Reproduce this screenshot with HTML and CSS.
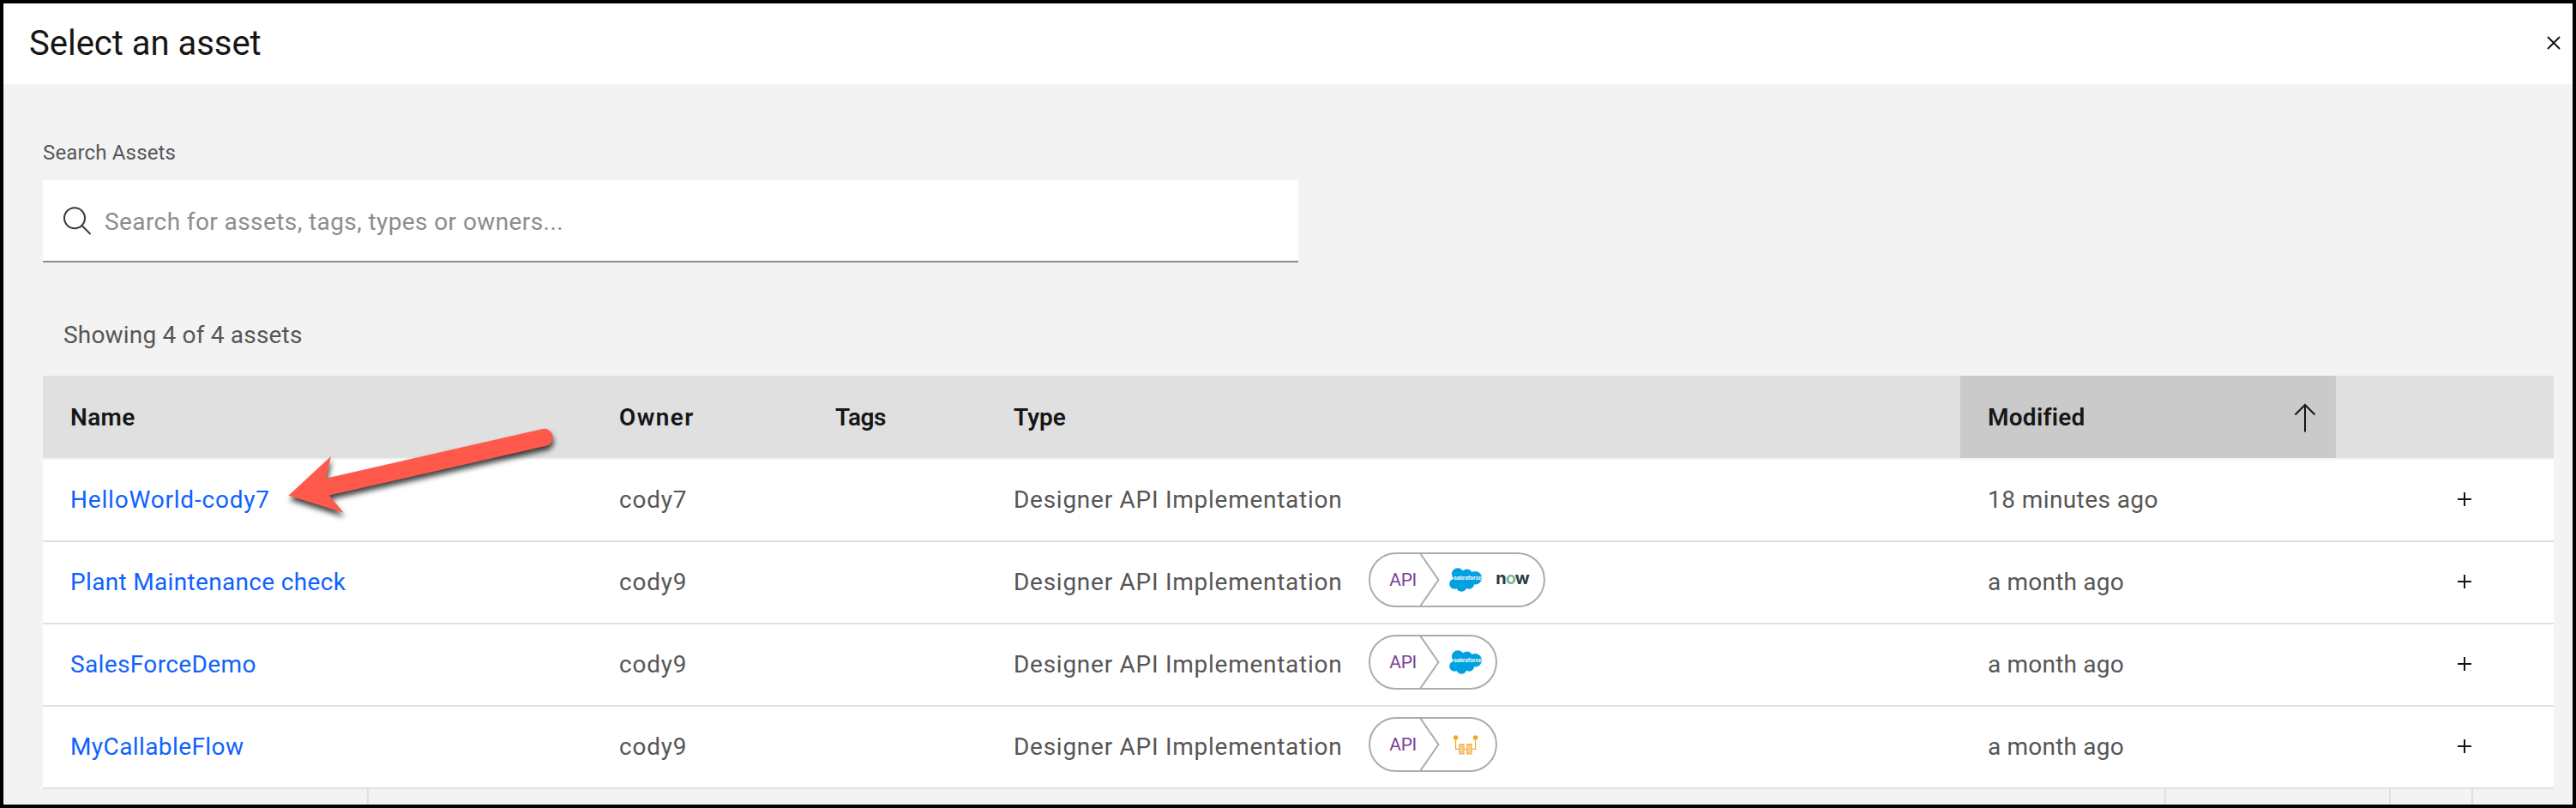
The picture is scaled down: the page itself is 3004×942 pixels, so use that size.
FILE: index.html
```html
<!DOCTYPE html>
<html lang="en">
<head>
<meta charset="utf-8">
<title>Select an asset</title>
<link rel="stylesheet" href="styles.css">
</head>
<body>
<svg class="defs" width="0" height="0" aria-hidden="true">
  <symbol id="plus" viewBox="0 0 16 16"><path d="M7 0h2v7h7v2H9v7H7V9H0V7h7z"/></symbol>
  <symbol id="chevron" viewBox="0 0 24 60"><path d="M1 -1L22.5 30L1 61" fill="none" stroke="#acacac" stroke-width="2"/></symbol>
  <symbol id="cloud" viewBox="0 0 38 28">
    <g fill="#00a1e0"><circle cx="10" cy="7.3" r="7"/><circle cx="20.7" cy="7.7" r="6.3"/><circle cx="30.2" cy="11.8" r="7.8"/><circle cx="6.2" cy="18.7" r="6"/><circle cx="14.3" cy="21.6" r="6.2"/><circle cx="23.3" cy="19" r="5.8"/><path d="M6 8h24v10H6z"/></g>
  </symbol>
  <symbol id="flow" viewBox="0 0 38 28">
    <g fill="none" stroke="#f5b04a" stroke-width="1.2"><path d="M7.6 6v10.400h4.400M30.600 6v10.400h-4.400M17.500 16.400h3" stroke="#f5a623"/><path d="M11.900 10.700h5.200v11.200h-5.200zM20.800 10.700h5.200v11.200h-5.200z" fill="#f9cf94"/></g>
    <g fill="#f9a51a"><circle cx="7.600" cy="3" r="2.700"/><circle cx="30.600" cy="3" r="2.700"/></g>
  </symbol>
</svg>
<div class="dialog">
  <header class="dialog-header">
    <h1 class="title">Select an asset</h1>
    <svg class="close" viewBox="0 0 16 16"><path d="M1 1l14 14M15 1L1 15"/></svg>
  </header>
  <main class="content">
    <div class="label">Search Assets</div>
    <div class="search">
      <svg class="search-icon" viewBox="0 0 34 34"><circle cx="14" cy="14.300" r="12"/><path d="M22.500 23L32.500 33"/></svg>
      <span class="placeholder">Search for assets, tags, types or owners...</span>
    </div>
    <div class="count">Showing 4 of 4 assets</div>
    <div class="table">
      <div class="row head">
        <div class="cell">Name</div>
        <div class="cell owner-head">Owner</div>
        <div class="cell tags-head">Tags</div>
        <div class="cell type-head">Type</div>
        <div class="cell sorted">Modified<svg class="sort" viewBox="0 0 26 34"><path d="M13 33.500V2M1.500 13.500L13 2l11.500 11.500"/></svg></div>
        <div class="cell"></div>
      </div>
      <div class="row">
        <div class="cell link hello">HelloWorld-cody7</div>
        <div class="cell owner">cody7</div>
        <div class="cell"></div>
        <div class="cell type">Designer API Implementation</div>
        <div class="cell minutes">18 minutes ago</div>
        <div class="cell action"><svg class="plus"><use href="#plus"/></svg></div>
      </div>
      <div class="row">
        <div class="cell link plant">Plant Maintenance check</div>
        <div class="cell owner">cody9</div>
        <div class="cell"></div>
        <div class="cell type">Designer API Implementation
          <div class="pill">
            <span class="api">API</span><svg class="chevron"><use href="#chevron"/></svg>
            <div class="brand"><svg class="logo"><use href="#cloud"/></svg><span class="cloud-text">salesforce</span></div>
            <div class="now">n<span class="green">o</span>w</div>
          </div>
        </div>
        <div class="cell month">a month ago</div>
        <div class="cell action"><svg class="plus"><use href="#plus"/></svg></div>
      </div>
      <div class="row">
        <div class="cell link sales">SalesForceDemo</div>
        <div class="cell owner">cody9</div>
        <div class="cell"></div>
        <div class="cell type">Designer API Implementation
          <div class="pill">
            <span class="api">API</span><svg class="chevron"><use href="#chevron"/></svg>
            <div class="brand"><svg class="logo"><use href="#cloud"/></svg><span class="cloud-text">salesforce</span></div>
          </div>
        </div>
        <div class="cell month">a month ago</div>
        <div class="cell action"><svg class="plus"><use href="#plus"/></svg></div>
      </div>
      <div class="row">
        <div class="cell link callable">MyCallableFlow</div>
        <div class="cell owner">cody9</div>
        <div class="cell"></div>
        <div class="cell type">Designer API Implementation
          <div class="pill"><span class="api">API</span><svg class="chevron"><use href="#chevron"/></svg><svg class="logo flow"><use href="#flow"/></svg></div>
        </div>
        <div class="cell month">a month ago</div>
        <div class="cell action"><svg class="plus"><use href="#plus"/></svg></div>
      </div>
    </div>
    <div class="pager"><span></span><span></span><span></span><span></span></div>
  </main>
</div>
<svg class="arrow" viewBox="320 500 350 120">
  <path d="M336.500 577.700L386 532L380 557.700L632 500.200A10 10 0 0 1 637 519.800L383.700 577.500L400.500 597.700Z"/>
</svg>
</body>
</html>
```
FILE: styles.css
```css
* { box-sizing: border-box; }
body { margin: 0; font-family: Roboto, "Liberation Sans", sans-serif; font-size: 28px; color: #565656; }
.defs { position: absolute; }
.dialog { width: 3004px; height: 942px; border: 4px solid #000; background: #f3f3f3; overflow: hidden; }

.dialog-header { height: 94px; background: #fff; display: flex; align-items: center; justify-content: space-between; padding: 0 14px 2px 30px; }
.title { margin: 0; font-size: 40px; font-weight: 400; color: #161616; letter-spacing: -.02px; }
.close { width: 16px; height: 16px; fill: none; stroke: #161616; stroke-width: 2; }

.content { padding: 64px 22px 0 46px; }
.label { font-size: 24px; line-height: 32px; letter-spacing: .16px; margin-bottom: 16px; }
.search { width: 1464px; height: 96px; background: #fff; border-bottom: 2px solid #8d8d8d; display: flex; align-items: center; padding-left: 23px; }
.search-icon { width: 34px; height: 34px; fill: none; stroke: #393939; stroke-width: 2; }
.placeholder { color: #8d8d8d; letter-spacing: .41px; margin-left: 15px; padding-top: 2px; }
.count { margin: 65px 0 27px 24px; line-height: 40px; letter-spacing: .19px; }

.row { display: grid; grid-template-columns: 640px 252px 208px 1136px 438px 254px; height: 96px; background: #fff; border-bottom: 2px solid #e0e0e0; }
.cell { display: flex; align-items: center; padding: 0 0 2px 32px; white-space: nowrap; }
.head { height: 98px; background: #e0e0e0; border-color: #f3f3f3; color: #161616; font-weight: 600; letter-spacing: .35px; }
.head .cell { padding-bottom: 0; }
.owner-head { letter-spacing: 1.4px; }
.tags-head { letter-spacing: -.4px; }
.type-head { letter-spacing: 0; }
.sorted { background: #cacaca; justify-content: space-between; padding-right: 23px; letter-spacing: .26px; }
.sort { width: 26px; height: 34px; margin-top: 2px; fill: none; stroke: #161616; stroke-width: 2; }
.link { color: #0f62fe; }
.hello { letter-spacing: .8px; }
.plant { letter-spacing: .33px; }
.sales { letter-spacing: .37px; }
.callable { letter-spacing: .41px; }
.owner { letter-spacing: .78px; }
.type { letter-spacing: .73px; }
.minutes { letter-spacing: .42px; }
.month { letter-spacing: .2px; }
.action { padding-left: 142px; }
.plus { width: 16px; height: 16px; fill: #161616; }

.pill { height: 64px; margin: 0 0 4px 31px; padding: 0 16px 0 22px; border: 2px solid #acacac; border-radius: 32px; display: flex; align-items: center; }
.api { width: 35px; font-size: 21px; color: #7c3f98; letter-spacing: -.4px; }
.chevron { width: 24px; height: 60px; margin-right: 11px; }
.logo { width: 38px; height: 28px; }
.brand { position: relative; height: 28px; line-height: 0; }
.cloud-text { position: absolute; left: 5px; top: 7px; font: 600 6.8px/10px "Liberation Sans", sans-serif; letter-spacing: -.1px; color: #fff; }
.flow { margin-top: 6px; }
.now { width: 40px; margin-left: 16px; padding-bottom: 4px; font: 700 20px/24px Inter, sans-serif; letter-spacing: -1px; color: #293e40; }
.green { color: #81b5a1; }

.pager { display: flex; height: 18px; }
.pager span { border-right: 2px solid #e0e0e0; width: 380px; }
.pager span:nth-child(2) { width: 2096px; }
.pager span:nth-child(3) { width: 262px; }
.pager span:nth-child(4) { width: 96px; }

.arrow { position: absolute; left: 320px; top: 500px; width: 350px; height: 120px; overflow: visible; fill: #ff594c; filter: drop-shadow(1px 5px 3px rgba(0, 0, 0, .75)); }
```
